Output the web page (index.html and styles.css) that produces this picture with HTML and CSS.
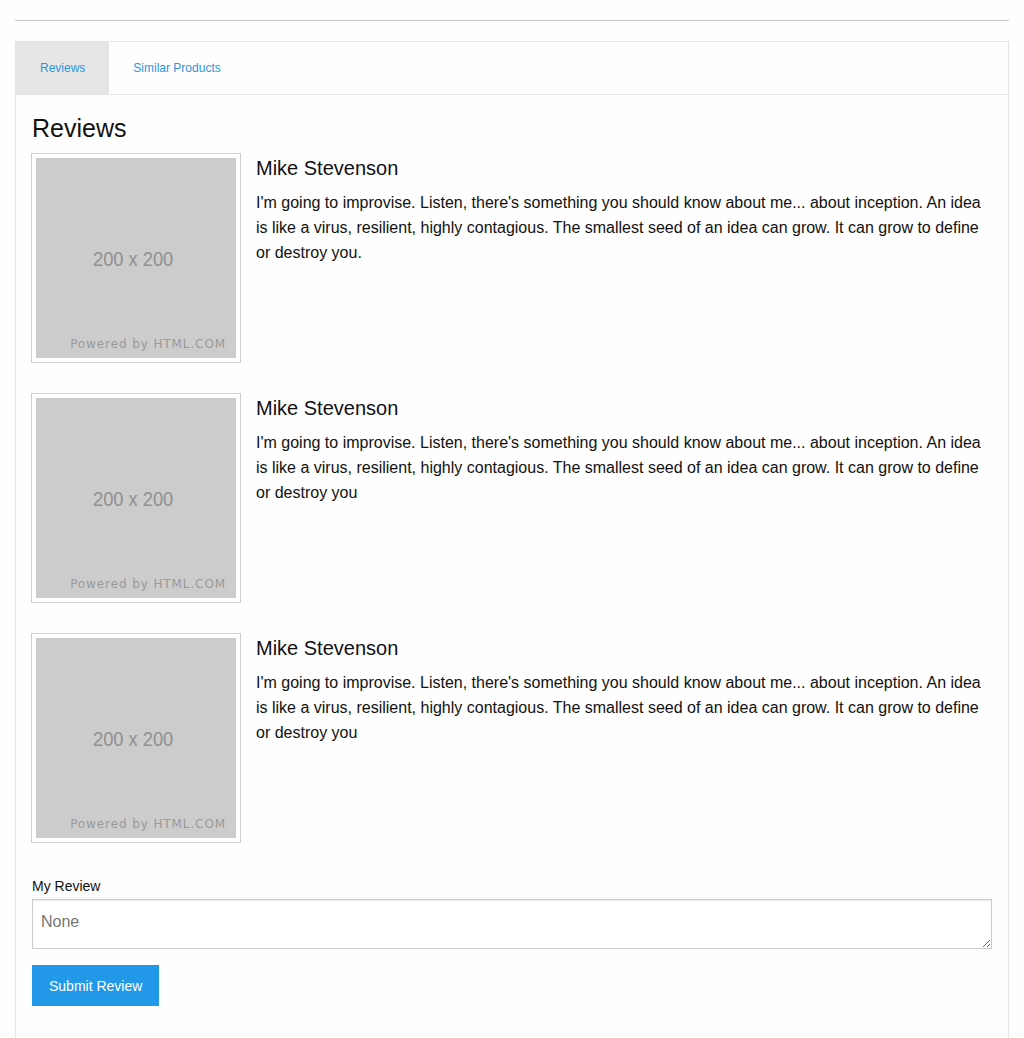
FILE: index.html
```html
<!DOCTYPE html>
<html>
<head>
<meta charset="utf-8">
<link rel="stylesheet" href="styles.css">
</head>
<body>
<div class="page">
  <hr class="rule">
  <div class="panel">
    <div class="tabs">
      <a class="tab active">Reviews</a>
      <a class="tab">Similar Products</a>
    </div>
    <div class="content">
      <h2 class="title">Reviews</h2>
      <div class="review">
        <div class="thumb"><div class="ph"><span class="ph-size">200 x 200</span><span class="ph-cap">Powered by HTML.COM</span></div></div>
        <div class="body">
          <h3 class="name">Mike Stevenson</h3>
          <p class="text">I'm going to improvise. Listen, there's something you should know about me... about inception. An idea is like a virus, resilient, highly contagious. The smallest seed of an idea can grow. It can grow to define or destroy you.</p>
        </div>
      </div>
      <div class="review">
        <div class="thumb"><div class="ph"><span class="ph-size">200 x 200</span><span class="ph-cap">Powered by HTML.COM</span></div></div>
        <div class="body">
          <h3 class="name">Mike Stevenson</h3>
          <p class="text">I'm going to improvise. Listen, there's something you should know about me... about inception. An idea is like a virus, resilient, highly contagious. The smallest seed of an idea can grow. It can grow to define or destroy you</p>
        </div>
      </div>
      <div class="review">
        <div class="thumb"><div class="ph"><span class="ph-size">200 x 200</span><span class="ph-cap">Powered by HTML.COM</span></div></div>
        <div class="body">
          <h3 class="name">Mike Stevenson</h3>
          <p class="text">I'm going to improvise. Listen, there's something you should know about me... about inception. An idea is like a virus, resilient, highly contagious. The smallest seed of an idea can grow. It can grow to define or destroy you</p>
        </div>
      </div>
      <form class="form">
        <label class="label" for="rv">My Review</label>
        <textarea id="rv" class="area" placeholder="None"></textarea>
        <button type="button" class="btn">Submit Review</button>
      </form>
    </div>
  </div>
</div>
</body>
</html>
```

FILE: styles.css
```css
html, body {
  margin: 0;
  padding: 0;
  background: #fefefe;
  font-family: "Liberation Sans", Arial, sans-serif;
  color: #111;
}
.page {
  padding: 20px 15px 0 15px;
}
.rule {
  margin: 0;
  border: 0;
  border-top: 1px solid #c8c8c8;
  height: 0;
}
.panel {
  margin-top: 20px;
  border: 1px solid #e3e3e3;
  background: #fefefe;
  padding-bottom: 40px;
}
.tabs {
  display: flex;
  border-bottom: 1px solid #e3e3e3;
}
.tab {
  display: block;
  height: 52px;
  line-height: 52px;
  padding: 0 24px;
  font-size: 12px;
  color: #2d95e0;
  cursor: pointer;
}
.tab.active {
  background: #e6e6e6;
}
.content {
  padding: 16px 16px 0 16px;
}
.title {
  margin: 0 0 8px 0;
  font-size: 25px;
  line-height: 34px;
  font-weight: normal;
  color: #111;
}
.review {
  display: flex;
  margin-bottom: 30px;
  margin-left: -1px;
}
.thumb {
  flex: none;
  border: 1px solid #cfcfcf;
  padding: 4px;
  background: #fff;
}
.ph {
  position: relative;
  width: 200px;
  height: 200px;
  background: #cccccc;
  display: flex;
  align-items: center;
  justify-content: center;
}
.ph-size {
  font-size: 21px;
  color: #919191;
  transform: scaleX(0.87);
  margin-left: -6px;
  margin-top: 2px;
  white-space: nowrap;
}
.ph-cap {
  position: absolute;
  right: 10px;
  bottom: 7px;
  font-family: "DejaVu Sans", sans-serif;
  font-size: 12px;
  letter-spacing: 0.9px;
  color: #9a9a9a;
}
.body {
  margin-left: 15px;
}
.name {
  margin: 3px 0 10px 0;
  font-size: 20px;
  line-height: 24px;
  font-weight: normal;
  color: #111;
}
.text {
  margin: 0;
  font-size: 16px;
  line-height: 25px;
  color: #111;
}
.form {
  display: flex;
  flex-direction: column;
  align-items: flex-start;
  padding-top: 3px;
}
.label {
  font-size: 14px;
  line-height: 20px;
  margin-bottom: 3px;
  color: #111;
}
.area {
  box-sizing: border-box;
  width: 100%;
  height: 50px;
  border: 1px solid #cccccc;
  box-shadow: inset 0 1px 1px rgba(0,0,0,0.08);
  padding: 12px 8px 8px 8px;
  font-family: "Liberation Sans", Arial, sans-serif;
  font-size: 16px;
  line-height: 20px;
  background: #fff;
  margin: 0;
}
.area::placeholder {
  color: #777;
}
.btn {
  margin-top: 16px;
  height: 41px;
  padding: 0 17px;
  border: 0;
  background: #2199e8;
  color: #fff;
  font-family: "Liberation Sans", Arial, sans-serif;
  font-size: 14px;
  cursor: pointer;
}
```
